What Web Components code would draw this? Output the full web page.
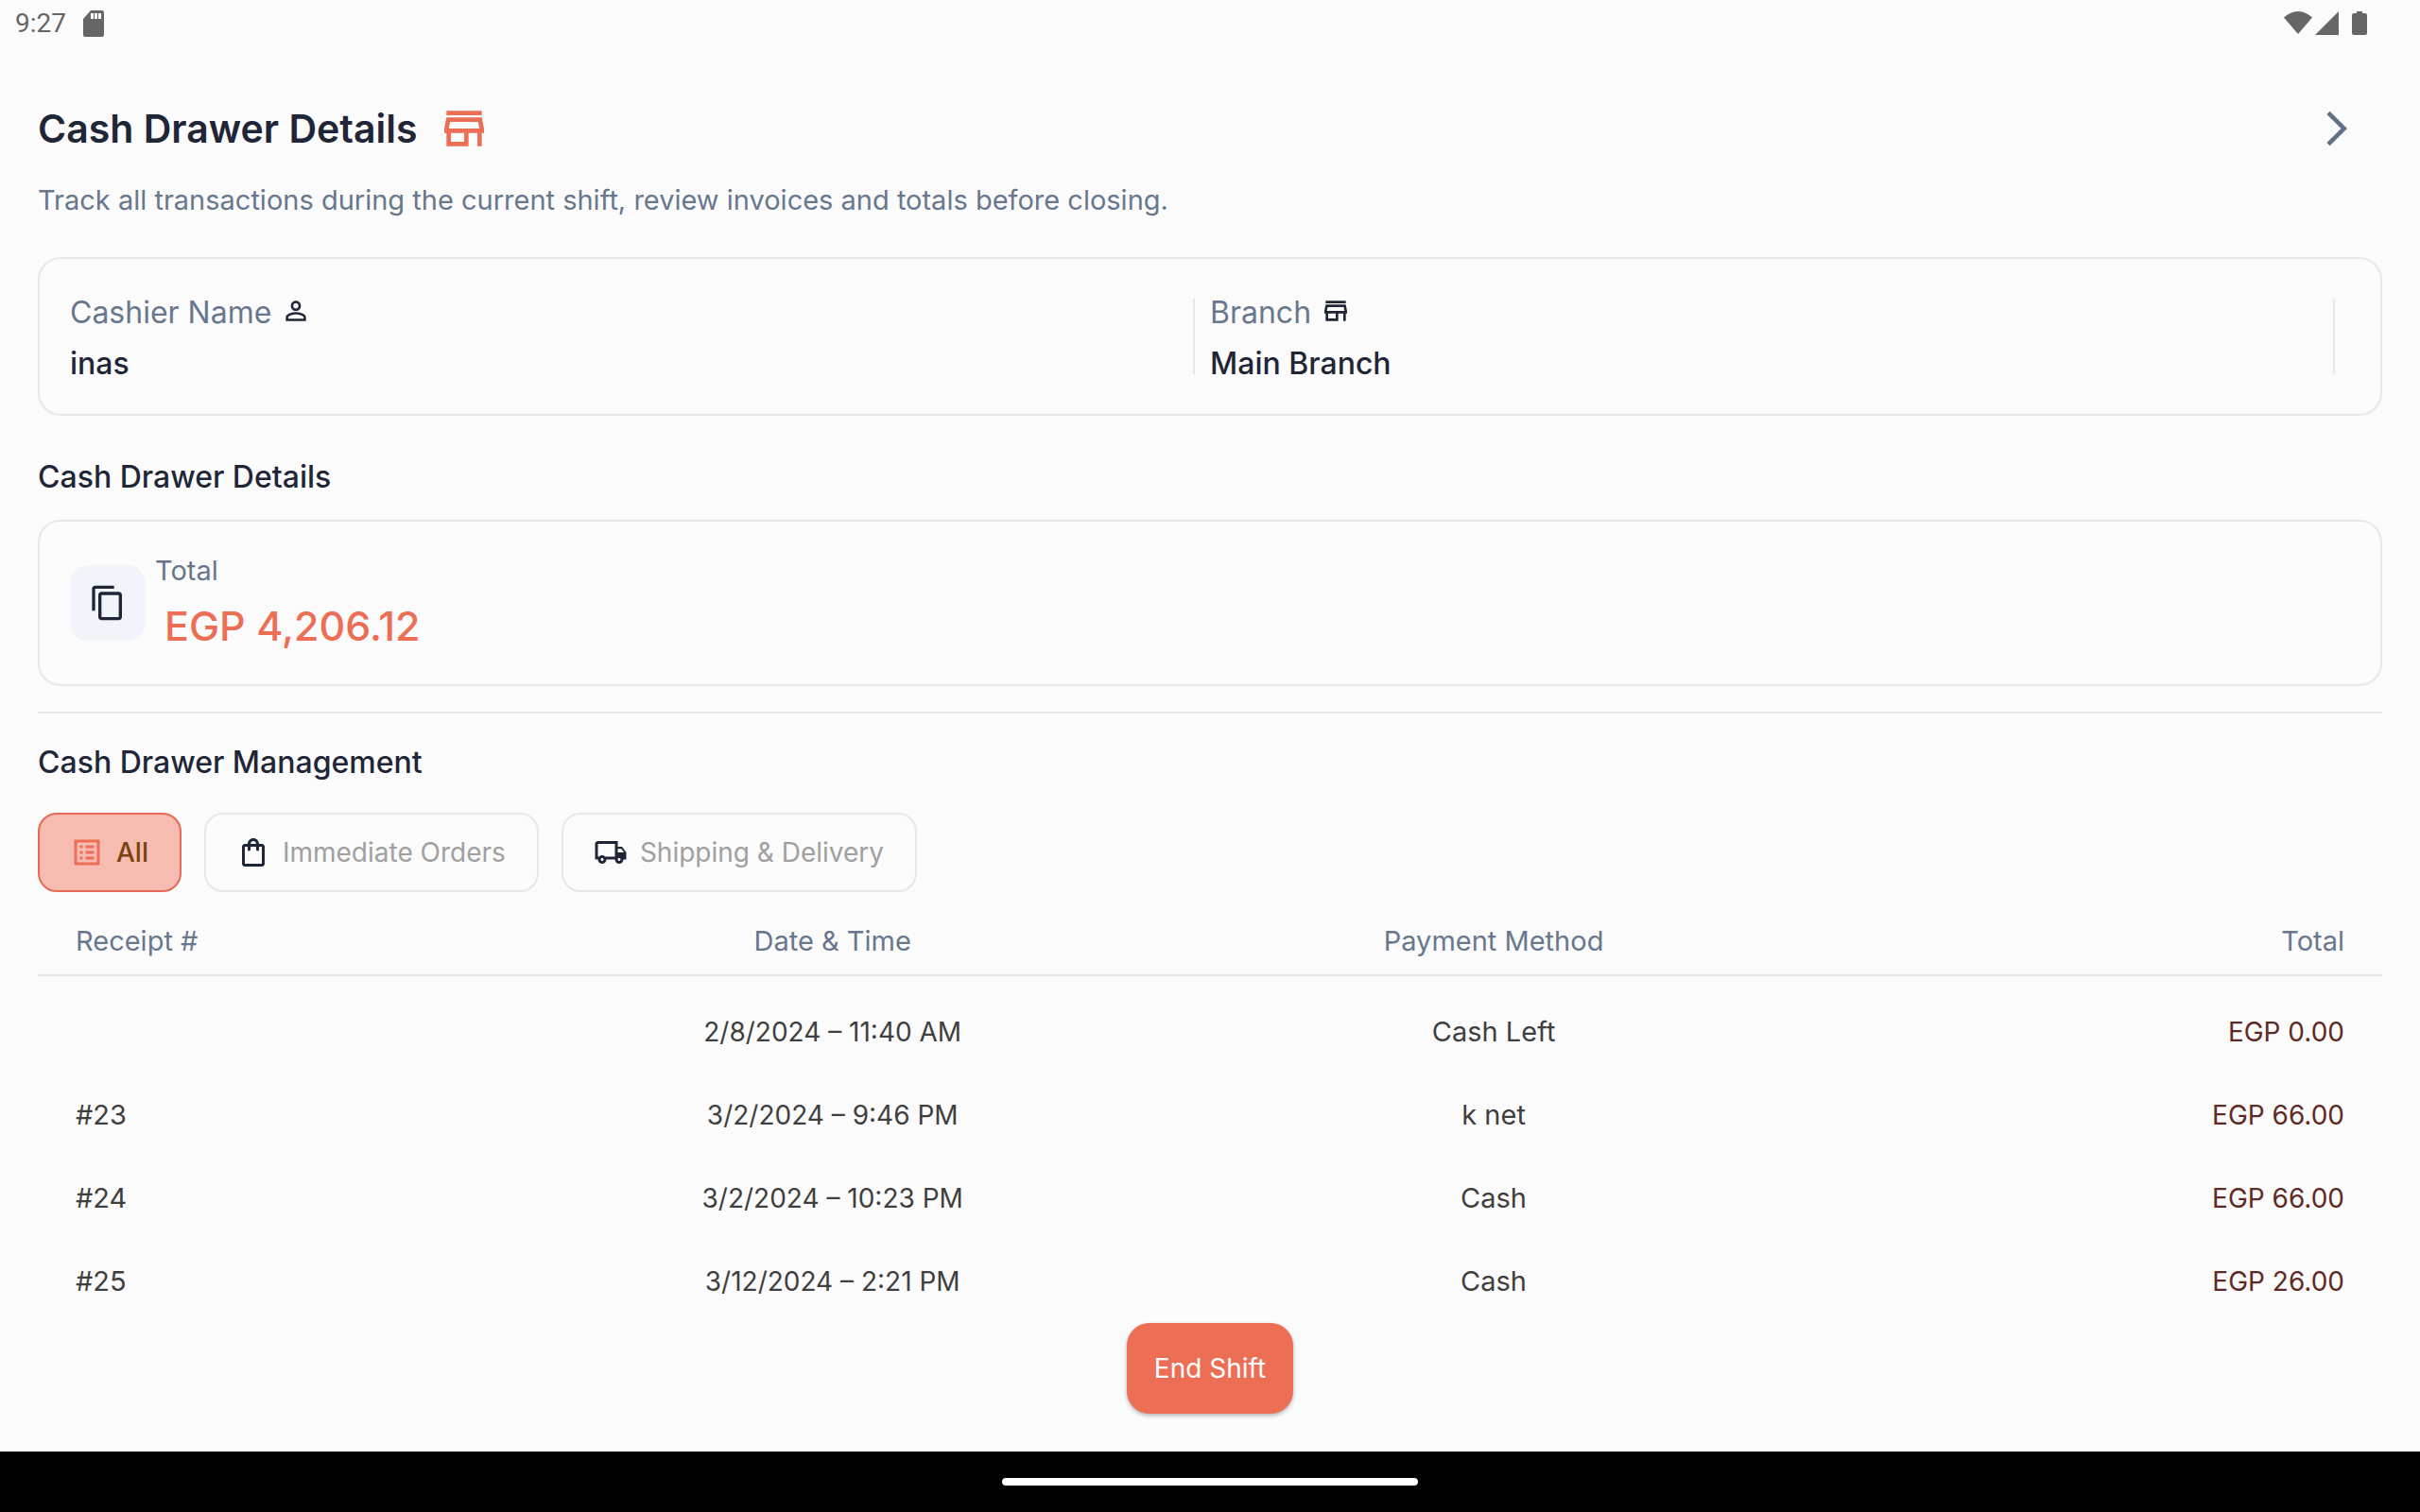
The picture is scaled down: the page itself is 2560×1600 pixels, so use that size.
<!DOCTYPE html>
<html lang="en">
<head>
<meta charset="utf-8">
<meta name="viewport" content="width=device-width, initial-scale=1">
<title>Cash Drawer Details</title>
<style>
  :root {
    --bg: #fbfbfb;
    --ink: #1f2637;
    --muted: #68778d;
    --line: #e5e7e9;
    --accent: #ec6e55;
  }
  body {
    margin: 0;
    background: var(--bg);
    color: var(--ink);
    font-family: Inter, "Noto Sans", sans-serif;
    font-size: 29px;
    line-height: 44px;
  }
</style>
</head>
<body>
<drawer-app>
  <status-bar slot="status" time="9:27"></status-bar>

  <page-header heading="Cash Drawer Details">
    Track all transactions during the current shift, review invoices and totals before closing.
  </page-header>

  <info-card>
    <info-field label="Cashier Name" icon="person">inas</info-field>
    <info-field label="Branch" icon="store">Main Branch</info-field>
  </info-card>

  <section-title class="details">Cash Drawer Details</section-title>
  <total-card label="Total">EGP 4,206.12</total-card>
  <section-title class="management">Cash Drawer Management</section-title>

  <filter-tabs>
    <filter-tab icon="list" active>All</filter-tab>
    <filter-tab icon="bag">Immediate Orders</filter-tab>
    <filter-tab icon="truck">Shipping &amp; Delivery</filter-tab>
  </filter-tabs>

  <receipt-table></receipt-table>

  <end-button slot="footer">End Shift</end-button>
  <nav-bar slot="nav"></nav-bar>
</drawer-app>

<script>
const ICONS = {
  store: "M18.36 9l.6 3H5.04l.6-3h12.72M20 4H4v2h16V4zm0 3H4l-1 5v2h1v6h10v-6h4v6h2v-6h1v-2l-1-5zM6 18v-4h6v4H6z",
  person: "M12 5.9c1.16 0 2.1.94 2.1 2.1s-.94 2.1-2.1 2.1S9.9 9.16 9.9 8s.94-2.1 2.1-2.1m0 9c2.97 0 6.1 1.46 6.1 2.1v1.1H5.9V17c0-.64 3.13-2.1 6.1-2.1M12 4C9.79 4 8 5.79 8 8s1.79 4 4 4 4-1.79 4-4-1.79-4-4-4zm0 9c-2.67 0-8 1.34-8 4v3h16v-3c0-2.66-5.33-4-8-4z",
  chevron: "M6.23 20.23L8 22l10-10L8 2 6.23 3.77 14.46 12z",
  copy: "M16 1H4c-1.1 0-2 .9-2 2v14h2V3h12V1zm3 4H8c-1.1 0-2 .9-2 2v14c0 1.1.9 2 2 2h11c1.1 0 2-.9 2-2V7c0-1.1-.9-2-2-2zm0 16H8V7h11v14z",
  list: "M19 5v14H5V5h14m1.1-2H3.9c-.5 0-.9.4-.9.9v16.2c0 .4.4.9.9.9h16.2c.4 0 .9-.5.9-.9V3.9c0-.5-.5-.9-.9-.9zM11 7h6v2h-6V7zm0 4h6v2h-6v-2zm0 4h6v2h-6zM7 7h2v2H7zm0 4h2v2H7zm0 4h2v2H7z",
  bag: "M18 6h-2c0-2.21-1.79-4-4-4S8 3.79 8 6H6c-1.1 0-2 .9-2 2v12c0 1.1.9 2 2 2h12c1.1 0 2-.9 2-2V8c0-1.1-.9-2-2-2zm-6-2c1.1 0 2 .9 2 2h-4c0-1.1.9-2 2-2zm6 16H6V8h2v2c0 .55.45 1 1 1s1-.45 1-1V8h4v2c0 .55.45 1 1 1s1-.45 1-1V8h2v12z",
  truck: "M20 8h-3V4H3c-1.1 0-2 .9-2 2v11h2c0 1.66 1.34 3 3 3s3-1.34 3-3h6c0 1.66 1.34 3 3 3s3-1.34 3-3h2v-5l-3-4zm-.5 1.5l1.96 2.5H17V9.5h2.5zM6 18c-.55 0-1-.45-1-1s.45-1 1-1 1 .45 1 1-.45 1-1 1zm2.22-3c-.55-.61-1.33-1-2.22-1s-1.67.39-2.22 1H3V6h12v9H8.22zM18 18c-.55 0-1-.45-1-1s.45-1 1-1 1 .45 1 1-.45 1-1 1z",
};

const RECEIPTS = [
  { id: "", date: "2/8/2024 – 11:40 AM", method: "Cash Left", total: "EGP 0.00" },
  { id: "#23", date: "3/2/2024 – 9:46 PM", method: "k net", total: "EGP 66.00" },
  { id: "#24", date: "3/2/2024 – 10:23 PM", method: "Cash", total: "EGP 66.00" },
  { id: "#25", date: "3/12/2024 – 2:21 PM", method: "Cash", total: "EGP 26.00" },
];

function icon(name, size) {
  return `<svg width="${size}" height="${size}" viewBox="0 0 24 24" fill="currentColor" aria-hidden="true"><path d="${ICONS[name]}"/></svg>`;
}

// Base class: opens the shadow root and fills it from render()
class BaseElement extends HTMLElement {
  connectedCallback() {
    if (!this.shadowRoot) this.attachShadow({ mode: "open" });
    this.shadowRoot.innerHTML = this.render();
  }
}

class DrawerApp extends BaseElement {
  render() {
    return `
      <style>
        :host { display: flex; flex-direction: column; min-height: 100vh; }
        main {
          flex: 1;
          display: flex;
          flex-direction: column;
          padding: 58px 40px 0;
        }
        footer { display: flex; justify-content: center; padding-bottom: 40px; }
        ::slotted(.details) { margin: 41px 0 21px; }
        ::slotted(.management) {
          margin: 27px 0 29px;
          padding-top: 28px;
          border-top: 2px solid var(--line);
        }
      </style>
      <slot name="status"></slot>
      <main><slot></slot></main>
      <footer><slot name="footer"></slot></footer>
      <slot name="nav"></slot>
    `;
  }
}

class StatusBar extends BaseElement {
  render() {
    return `
      <style>
        :host {
          display: flex;
          align-items: center;
          height: 50px;
          padding: 0 56px 0 16px;
          color: #666;
          font-family: Roboto, sans-serif;
          font-size: 28px;
        }
        svg { display: block; fill: #666; }
        .sd { margin-left: 18px; }
        .icons { display: flex; margin-left: auto; }
        .cell { margin: 0 14px 0 3px; }
      </style>
      <span>${this.getAttribute("time")}</span>
      <svg class="sd" width="22" height="28" viewBox="0 0 22 28" aria-hidden="true">
        <path fill-rule="evenodd" d="M8 0h12a2 2 0 0 1 2 2v24a2 2 0 0 1-2 2H2a2 2 0 0 1-2-2V9zM8 3v6h3V3zM12 3v6h3V3zM16 3v6h3V3z"/>
      </svg>
      <div class="icons">
        <svg width="30" height="26" viewBox="0 0 30 26" aria-hidden="true"><path d="M0 6.500C4 3 9 0 15 0s11 3 15 6.500L15 24z"/></svg>
        <svg class="cell" width="25" height="26" viewBox="0 0 25 26" aria-hidden="true"><path d="M25 0v25H0z"/></svg>
        <svg width="16" height="26" viewBox="0 0 16 26" aria-hidden="true"><path d="M5 0h6v2h3a2 2 0 0 1 2 2v19a2 2 0 0 1-2 2H2a2 2 0 0 1-2-2V4a2 2 0 0 1 2-2h3z"/></svg>
      </div>
    `;
  }
}

class PageHeader extends BaseElement {
  render() {
    return `
      <style>
        :host { display: block; margin-bottom: 38px; }
        .row { display: flex; align-items: center; height: 56px; margin-bottom: 26px; }
        h1 { margin: 0 22px 0 0; font-size: 41px; font-weight: 600; }
        svg { display: block; }
        .brand { color: var(--accent); }
        button {
          margin-left: auto;
          margin-right: 26px;
          padding: 0;
          border: 0;
          background: none;
          color: #607087;
          cursor: pointer;
        }
        p { margin: 0; color: var(--muted); }
      </style>
      <div class="row">
        <h1>${this.getAttribute("heading")}</h1>
        <span class="brand">${icon("store", 56)}</span>
        <button type="button" aria-label="Next">${icon("chevron", 44)}</button>
      </div>
      <p><slot></slot></p>
    `;
  }
}

class InfoCard extends BaseElement {
  render() {
    return `
      <style>
        :host {
          display: grid;
          grid-template-columns: 1fr 1fr;
          padding: 32px;
          border: 2px solid var(--line);
          border-radius: 24px;
        }
      </style>
      <slot></slot>
    `;
  }
}

class InfoField extends BaseElement {
  render() {
    return `
      <style>
        :host {
          display: flex;
          align-items: center;
          justify-content: space-between;
          height: 100px;
          padding-right: 16px;
          font-size: 32px;
        }
        .text { display: grid; gap: 10px; padding-top: 4px; }
        .label { display: flex; align-items: center; gap: 10px; color: var(--muted); }
        .value { font-weight: 500; }
        svg { display: block; padding-bottom: 4px; color: var(--ink); }
        .divider { width: 2px; height: 80px; background: var(--line); }
      </style>
      <div class="text">
        <div class="label"><span>${this.getAttribute("label")}</span>${icon(this.getAttribute("icon"), 32)}</div>
        <div class="value"><slot></slot></div>
      </div>
      <div class="divider"></div>
    `;
  }
}

class SectionTitle extends BaseElement {
  render() {
    return `
      <style>
        :host { display: block; }
        h2 { margin: 0; font-size: 32px; font-weight: 500; line-height: 48px; }
      </style>
      <h2><slot></slot></h2>
    `;
  }
}

class TotalCard extends BaseElement {
  render() {
    return `
      <style>
        :host {
          display: flex;
          align-items: center;
          gap: 10px;
          padding: 30px 32px;
          border: 2px solid var(--line);
          border-radius: 24px;
        }
        .tile {
          display: grid;
          place-items: center;
          width: 80px;
          height: 80px;
          border-radius: 20px;
          background: #f1f5f9;
        }
        .label { color: var(--muted); }
        .amount {
          padding: 4px 0 0 10px;
          color: var(--accent);
          font-size: 43px;
          font-weight: 500;
          line-height: 64px;
        }
      </style>
      <div class="tile">${icon("copy", 40)}</div>
      <div>
        <div class="label">${this.getAttribute("label")}</div>
        <div class="amount"><slot></slot></div>
      </div>
    `;
  }
}

class FilterTabs extends BaseElement {
  render() {
    return `
      <style>
        :host { display: flex; gap: 24px; font-size: 28px; }
      </style>
      <slot></slot>
    `;
  }
}

class FilterTab extends BaseElement {
  render() {
    const active = this.hasAttribute("active");
    return `
      <style>
        :host { display: block; }
        button {
          display: flex;
          align-items: center;
          gap: 13px;
          height: 84px;
          padding: 0 33px 0 32px;
          border: 2px solid var(--line);
          border-radius: 20px;
          background: none;
          color: #a0a0a0;
          font: inherit;
          cursor: pointer;
        }
        svg { display: block; color: var(--ink); }
        :host([active]) button {
          border-color: #e66a56;
          background: #f6bbb1;
          color: #7a430f;
          font-weight: 500;
        }
        :host([active]) svg { color: var(--accent); }
      </style>
      <button type="button" aria-pressed="${active}">${icon(this.getAttribute("icon"), 36)}<span><slot></slot></span></button>
    `;
  }
}

class ReceiptTable extends BaseElement {
  render() {
    const rows = RECEIPTS.map((r) => `
      <tr><td>${r.id}</td><td class="num">${r.date}</td><td>${r.method}</td><td class="num total">${r.total}</td></tr>`).join("");
    return `
      <style>
        :host { display: block; }
        table { width: 100%; table-layout: fixed; border-collapse: separate; border-spacing: 0; }
        .side { width: 19.8%; }
        .mid { width: 28.2%; }
        th, td { padding: 0; text-align: center; font-weight: 400; }
        th:first-child, td:first-child { padding-left: 40px; text-align: left; }
        th:last-child, td:last-child { padding-right: 40px; text-align: right; }
        th {
          padding-top: 30px;
          padding-bottom: 13px;
          border-bottom: 2px solid var(--line);
          color: var(--muted);
        }
        td { height: 88px; color: #3f3f40; }
        td.num { font-size: 28px; }
        td.total { color: #5e2a25; }
        tbody::before { content: ""; display: table-row; height: 15px; }
      </style>
      <table>
        <colgroup><col class="side"><col class="mid"><col class="mid"><col></colgroup>
        <thead>
          <tr><th scope="col">Receipt #</th><th scope="col">Date &amp; Time</th><th scope="col">Payment Method</th><th scope="col">Total</th></tr>
        </thead>
        <tbody>${rows}</tbody>
      </table>
    `;
  }
}

class EndButton extends BaseElement {
  render() {
    return `
      <style>
        :host { display: block; font-size: 28px; }
        button {
          height: 96px;
          padding: 0 29px;
          border: 0;
          border-radius: 24px;
          background: var(--accent);
          box-shadow: 0 2px 4px rgba(0, 0, 0, 0.3);
          color: #fff;
          font: inherit;
          cursor: pointer;
        }
      </style>
      <button type="button"><slot></slot></button>
    `;
  }
}

class NavBar extends BaseElement {
  render() {
    return `
      <style>
        :host { display: grid; place-items: center; height: 64px; background: #000; }
        div { width: 440px; height: 8px; border-radius: 4px; background: #fff; }
      </style>
      <div></div>
    `;
  }
}

customElements.define("drawer-app", DrawerApp);
customElements.define("status-bar", StatusBar);
customElements.define("page-header", PageHeader);
customElements.define("info-card", InfoCard);
customElements.define("info-field", InfoField);
customElements.define("section-title", SectionTitle);
customElements.define("total-card", TotalCard);
customElements.define("filter-tabs", FilterTabs);
customElements.define("filter-tab", FilterTab);
customElements.define("receipt-table", ReceiptTable);
customElements.define("end-button", EndButton);
customElements.define("nav-bar", NavBar);
</script>
</body>
</html>
